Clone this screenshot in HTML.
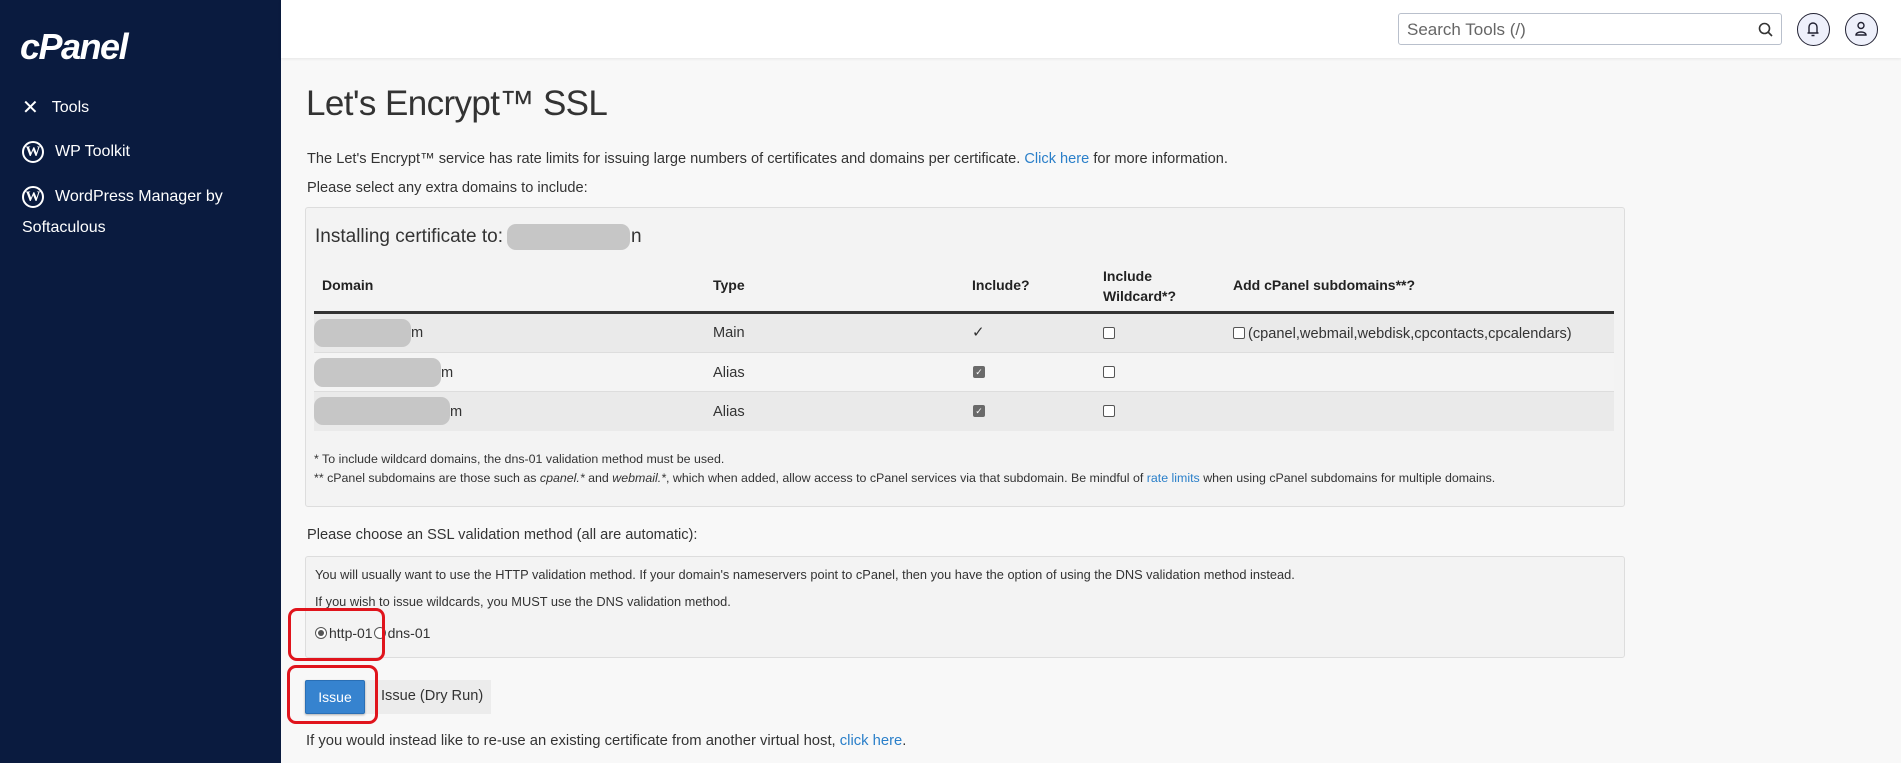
<!DOCTYPE html>
<html><head><meta charset="utf-8"><style>
*{box-sizing:border-box;margin:0;padding:0}
body{width:1901px;height:763px;overflow:hidden;background:#f8f8f8;font-family:"Liberation Sans",sans-serif;color:#333;position:relative}
.side{position:absolute;left:0;top:0;width:281px;height:763px;background:#0a1b3f;color:#fff}
.logo{position:absolute;left:20px;top:26px;font-size:36px;font-weight:bold;font-style:italic;letter-spacing:-1.5px;color:#fff}
.nav{position:absolute;left:22px;font-size:16px;color:#fff;display:flex;align-items:center}
.wp{width:22px;height:22px;border-radius:50%;border:2px solid #fff;display:inline-flex;align-items:center;justify-content:center;font-family:"Liberation Serif",serif;font-weight:bold;font-size:15px;margin-right:11px}
.head{position:absolute;left:281px;top:0;right:0;height:58px;background:#fff;box-shadow:0 1px 3px rgba(0,0,0,.08)}
.search{position:absolute;left:1398px;top:13px;width:384px;height:32px;border:1px solid #b9c0cc;border-radius:3px;background:#fff;font-size:17px;color:#666;padding:6px 8px}
.circ{position:absolute;top:13px;width:33px;height:33px;border-radius:50%;border:1.5px solid #223;background:#eef0fb}
.abs{position:absolute;white-space:nowrap}
.box{position:absolute;left:305px;width:1320px;background:#f3f3f3;border:1px solid #ddd;border-radius:3px}
.blob{position:absolute;background:#c6c6c6;border-radius:9px;height:26px}
.th{font-weight:bold;font-size:14px;color:#222}
.cb{position:absolute;width:12px;height:12px;border:1px solid #555;border-radius:2px;background:#fff}
.cbk{position:absolute;width:12px;height:12px;border-radius:2px;background:#6a6a6a;color:#fff;font-size:9px;text-align:center;line-height:12px}
a{color:#2a7fc9;text-decoration:none}
.red{position:absolute;border:3px solid #e0141c;border-radius:9px}
</style></head><body>
<div class="side">
<div class="logo">cPanel</div>
<div class="nav" style="top:95px"><span style="font-size:20px;margin-right:13px">✕</span>Tools</div>
<div class="nav" style="top:141px"><span class="wp">W</span>WP Toolkit</div>
<div class="nav" style="top:186px"><span class="wp">W</span>WordPress Manager by</div>
<div class="nav" style="top:219px">Softaculous</div>
</div>
<div class="head"></div>
<div class="search">Search Tools (/)<svg style="position:absolute;right:8px;top:8px" width="15" height="15" viewBox="0 0 15 15"><circle cx="6.5" cy="6.5" r="5" fill="none" stroke="#333" stroke-width="1.6"/><path d="M10 10l4 4" stroke="#333" stroke-width="1.6"/></svg></div>
<div class="circ" style="left:1797px"><svg width="30" height="30" viewBox="0 0 30 30"><path d="M11 19v-6a4 4 0 0 1 8 0v6M9.5 19h11M13.5 21.5h3" fill="none" stroke="#223" stroke-width="1.4"/></svg></div>
<div class="circ" style="left:1845px"><svg width="30" height="30" viewBox="0 0 30 30"><circle cx="15" cy="11.5" r="3" fill="none" stroke="#223" stroke-width="1.4"/><path d="M10 21c0-4 10-4 10 0z" fill="none" stroke="#223" stroke-width="1.4"/></svg></div>

<div class="abs" style="left:306px;top:84px;font-size:35px;letter-spacing:-0.6px;color:#333">Let's Encrypt™ SSL</div>
<div class="abs" style="left:307px;top:151px;font-size:14.6px">The Let's Encrypt™ service has rate limits for issuing large numbers of certificates and domains per certificate. <a>Click here</a> for more information.</div>
<div class="abs" style="left:307px;top:180px;font-size:14.6px">Please select any extra domains to include:</div>

<div class="box" style="top:207px;height:300px"></div>
<div class="abs" style="left:315px;top:226px;font-size:19px">Installing certificate to:<span style="display:inline-block;width:128px"></span>n</div>
<div class="blob" style="left:507px;top:224px;width:123px"></div>
<div class="abs th" style="left:322px;top:277px">Domain</div>
<div class="abs th" style="left:713px;top:277px">Type</div>
<div class="abs th" style="left:972px;top:277px">Include?</div>
<div class="abs th" style="left:1103px;top:266px;line-height:20px">Include<br>Wildcard*?</div>
<div class="abs th" style="left:1233px;top:277px">Add cPanel subdomains**?</div>
<div class="abs" style="left:314px;top:311px;width:1300px;height:3px;background:#333"></div>
<div class="abs" style="left:314px;top:314px;width:1300px;height:39px;background:#eaeaea;border-bottom:1px solid #ddd"></div>
<div class="abs" style="left:314px;top:353px;width:1300px;height:39px;background:#f4f4f4;border-bottom:1px solid #ddd"></div>
<div class="abs" style="left:314px;top:392px;width:1300px;height:39px;background:#eaeaea"></div>
<div class="abs" style="left:411px;top:325px;font-size:14.6px">m</div>
<div class="abs" style="left:441px;top:365px;font-size:14.6px">m</div>
<div class="abs" style="left:450px;top:404px;font-size:14.6px">m</div>
<div class="blob" style="left:314px;top:319px;width:97px;height:28px"></div>
<div class="blob" style="left:314px;top:358px;width:127px;height:29px"></div>
<div class="blob" style="left:314px;top:397px;width:136px;height:28px"></div>
<div class="abs" style="left:713px;top:325px;font-size:14.6px">Main</div>
<div class="abs" style="left:713px;top:365px;font-size:14.6px">Alias</div>
<div class="abs" style="left:713px;top:404px;font-size:14.6px">Alias</div>
<div class="abs" style="left:972px;top:323px;font-size:15px">✓</div>
<div class="cbk" style="left:973px;top:366px">✓</div>
<div class="cbk" style="left:973px;top:405px">✓</div>
<div class="cb" style="left:1103px;top:327px"></div>
<div class="cb" style="left:1103px;top:366px"></div>
<div class="cb" style="left:1103px;top:405px"></div>
<div class="cb" style="left:1233px;top:327px"></div>
<div class="abs" style="left:1248px;top:326px;font-size:14.6px">(cpanel,webmail,webdisk,cpcontacts,cpcalendars)</div>
<div class="abs" style="left:314px;top:452px;font-size:12.4px">* To include wildcard domains, the dns-01 validation method must be used.</div>
<div class="abs" style="left:314px;top:471px;font-size:12.4px">** cPanel subdomains are those such as <i>cpanel.*</i> and <i>webmail.*</i>, which when added, allow access to cPanel services via that subdomain. Be mindful of <a>rate limits</a> when using cPanel subdomains for multiple domains.</div>

<div class="abs" style="left:307px;top:527px;font-size:14.6px">Please choose an SSL validation method (all are automatic):</div>
<div class="box" style="top:556px;height:102px"></div>
<div class="abs" style="left:315px;top:567px;font-size:12.8px">You will usually want to use the HTTP validation method. If your domain's nameservers point to cPanel, then you have the option of using the DNS validation method instead.</div>
<div class="abs" style="left:315px;top:594px;font-size:12.8px">If you wish to issue wildcards, you MUST use the DNS validation method.</div>
<div class="abs" style="left:315px;top:625px;font-size:14px;display:flex;align-items:center"><span style="width:12px;height:12px;border:1px solid #555;border-radius:50%;display:inline-flex;align-items:center;justify-content:center;margin-right:2px;background:#fff"><span style="width:6px;height:6px;border-radius:50%;background:#555"></span></span>http-01<span style="width:12px;height:12px;border:1px solid #555;border-radius:50%;display:inline-block;margin:0 2px 0 1px;background:#fff"></span>dns-01</div>
<div class="red" style="left:288px;top:608px;width:97px;height:53px"></div>

<div class="abs" style="left:365px;top:680px;width:126px;height:34px;background:#ececec"></div>
<div class="abs" style="left:305px;top:680px;width:60px;height:34px;background:#3683cf;border:1px solid #2a6fb5;border-radius:2px;color:#fff;font-size:14px;text-align:center;line-height:32px;box-shadow:0 1px 2px rgba(0,0,0,.3)">Issue</div>
<div class="abs" style="left:381px;top:688px;font-size:14.6px">Issue (Dry Run)</div>
<div class="red" style="left:287px;top:665px;width:91px;height:59px"></div>
<div class="abs" style="left:306px;top:733px;font-size:14.8px">If you would instead like to re-use an existing certificate from another virtual host, <a>click here</a>.</div>
</body></html>
